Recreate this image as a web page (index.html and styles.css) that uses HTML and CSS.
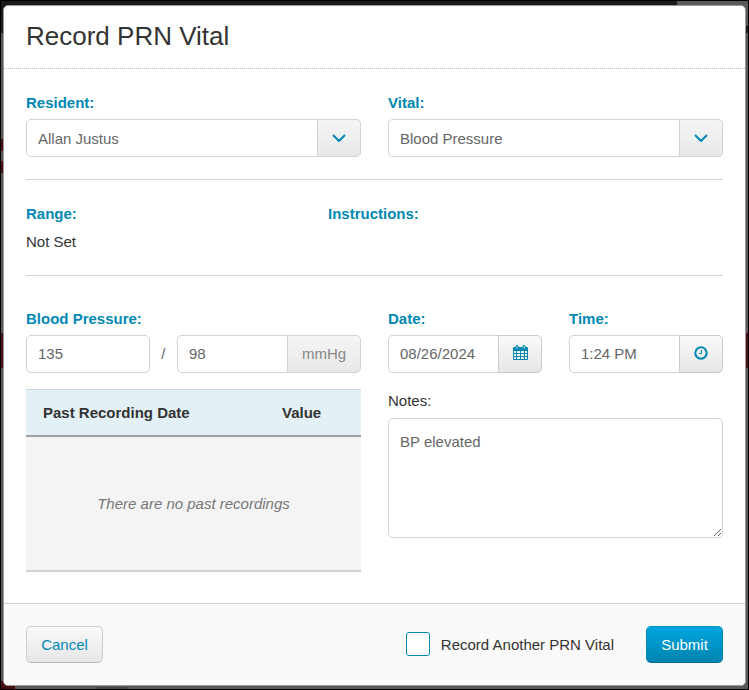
FILE: index.html
```html
<!DOCTYPE html>
<html lang="en">
<head>
<meta charset="utf-8">
<meta name="viewport" content="width=device-width, initial-scale=1">
<title>Record PRN Vital</title>
<link rel="stylesheet" href="styles.css">
</head>
<body>
<form class="modal">
  <header class="modal-header"><h1>Record PRN Vital</h1></header>
  <main class="modal-body">
    <div class="columns">
      <div class="field">
        <label for="resident">Resident:</label>
        <div class="select-box">
          <select id="resident"><option>Allan Justus</option></select>
          <span class="select-arrow"><svg width="14" height="8" viewBox="0 0 14 8" aria-hidden="true"><path d="M1 1l6 6 6-6" fill="none" stroke="currentColor" stroke-width="2"/></svg></span>
        </div>
      </div>
      <div class="field">
        <label for="vital">Vital:</label>
        <div class="select-box">
          <select id="vital"><option>Blood Pressure</option></select>
          <span class="select-arrow"><svg width="14" height="8" viewBox="0 0 14 8" aria-hidden="true"><path d="M1 1l6 6 6-6" fill="none" stroke="currentColor" stroke-width="2"/></svg></span>
        </div>
      </div>
    </div>

    <div class="info">
      <div>
        <h2>Range:</h2>
        <p>Not Set</p>
      </div>
      <div>
        <h2>Instructions:</h2>
      </div>
    </div>

    <div class="columns">
      <div>
        <div class="field">
          <label for="systolic">Blood Pressure:</label>
          <div class="pressure">
            <input id="systolic" class="text-input" type="text" value="135">
            <span class="slash">/</span>
            <div class="input-group">
              <input class="text-input" type="text" value="98" aria-labelledby="unit">
              <span class="addon" id="unit">mmHg</span>
            </div>
          </div>
        </div>
        <table class="history">
          <thead><tr><th class="date-col">Past Recording Date</th><th>Value</th></tr></thead>
          <tbody><tr><td colspan="2">There are no past recordings</td></tr></tbody>
        </table>
      </div>
      <div>
        <div class="columns">
          <div class="field">
            <label for="date">Date:</label>
            <div class="input-group">
              <input id="date" class="text-input" type="text" value="08/26/2024">
              <button class="icon-button" type="button" aria-labelledby="date">
                <svg width="15" height="15" viewBox="0 0 15 15" aria-hidden="true">
                  <rect y="2" width="15" height="13" rx="1" fill="currentColor"/>
                  <path d="M1 6h2v2H1zM4 6h3v2H4zM8 6h3v2H8zM12 6h2v2h-2zM1 9h2v2H1zM4 9h3v2H4zM8 9h3v2H8zM12 9h2v2h-2zM1 12h2v2H1zM4 12h3v2H4zM8 12h3v2H8zM12 12h2v2h-2z" fill="#f3f3f3"/>
                  <path d="M4 1.500v2M11 1.500v2" stroke="currentColor" stroke-width="3" stroke-linecap="round"/>
                  <path d="M4 1.500v2M11 1.500v2" stroke="#f3f3f3" stroke-width="1"/>
                </svg>
              </button>
            </div>
          </div>
          <div class="field">
            <label for="time">Time:</label>
            <div class="input-group">
              <input id="time" class="text-input" type="text" value="1:24 PM">
              <button class="icon-button" type="button" aria-labelledby="time">
                <svg width="14" height="14" viewBox="0 0 14 14" aria-hidden="true">
                  <circle cx="7" cy="7" r="5.700" fill="none" stroke="currentColor" stroke-width="2"/>
                  <path d="M7.500 4v3.500H5" fill="none" stroke="currentColor" stroke-width="1"/>
                </svg>
              </button>
            </div>
          </div>
        </div>
        <div class="field notes">
          <label for="notes">Notes:</label>
          <textarea id="notes">BP elevated</textarea>
        </div>
      </div>
    </div>
  </main>
  <footer class="modal-footer">
    <button class="button" type="button">Cancel</button>
    <label class="another"><input type="checkbox"> Record Another PRN Vital</label>
    <button class="button primary" type="submit">Submit</button>
  </footer>
</form>
</body>
</html>
```
FILE: styles.css
```css
* {
  box-sizing: border-box;
}

html {
  background: #000;
}

body {
  margin: 0;
  min-height: 100vh;
  display: flex;
  padding: 4px 2px 3px;
  border: 1px solid #000;
  background:
    linear-gradient(#5b5858, #5b5858) 100% 0 / 71px 25px no-repeat,
    linear-gradient(#1b1a1b, #1b1a1b) 0 0 / 100% 32px no-repeat,
    linear-gradient(#4d1011, #4d1011) 0 138px / 2px 12px no-repeat,
    linear-gradient(#4d1011, #4d1011) 0 160px / 2px 12px no-repeat,
    linear-gradient(#4d1011, #4d1011) 0 332px / 100% 35px no-repeat,
    linear-gradient(#461010, #461010) 0 100% / 14px 8px no-repeat,
    linear-gradient(#484646, #484646) 95px 100% / 32px 2px no-repeat,
    #5b5858;
  color: #333;
  font: 15px/20px "Liberation Sans", Arial, sans-serif;
}

h1,
h2,
p {
  margin: 0;
}

input,
select,
textarea,
button {
  margin: 0;
  font: inherit;
  color: #666;
}

.modal {
  flex: 1;
  display: flex;
  flex-direction: column;
  overflow: hidden;
  border: 1px solid #999;
  border-radius: 5px;
  background: #fff;
}

.modal-header {
  padding: 14px 22px 16px;
  border-bottom: 1px dotted #bbb;
}

h1 {
  font-size: 26px;
  font-weight: normal;
  line-height: 32px;
}

.modal-body {
  flex: 1;
  padding: 24px 22px 31px;
}

.columns {
  display: grid;
  grid-template-columns: 1fr 1fr;
  gap: 27px;
}

.field label,
h2 {
  display: block;
  color: #0088b3;
  font-size: 15px;
  font-weight: bold;
  line-height: 20px;
}

.field label {
  margin-bottom: 6px;
}

.select-box {
  position: relative;
}

select,
.text-input {
  width: 100%;
  min-width: 0;
  height: 38px;
  padding: 0 11px;
  border: 1px solid #d3d3d3;
  border-radius: 5px;
  background: #fff;
}

select {
  appearance: none;
  padding-top: 1px;
}

.text-input {
  padding-bottom: 2px;
}

.select-arrow,
.addon,
.icon-button {
  display: flex;
  align-items: center;
  justify-content: center;
  border: 1px solid #d3d3d3;
  border-radius: 0 5px 5px 0;
  background: linear-gradient(#f5f5f5, #e8e8e8);
  color: #0088b3;
}

.select-arrow {
  position: absolute;
  inset: 0 0 0 auto;
  width: 44px;
  pointer-events: none;
}

.info {
  display: grid;
  grid-template-columns: 302px 1fr;
  margin: 22px 0 33px;
  padding: 24px 0 23px;
  border: solid #d3d3d3;
  border-width: 1px 0;
}

.info p {
  margin-top: 8px;
}

.pressure {
  display: grid;
  grid-template-columns: 37% 27px 1fr;
  align-items: center;
}

.slash {
  text-align: center;
  color: #666;
}

.input-group {
  display: flex;
}

.input-group .text-input {
  flex: 1;
  border-right: 0;
  border-radius: 5px 0 0 5px;
}

.addon {
  width: 74px;
  color: #888;
}

.icon-button {
  width: 44px;
  padding: 0 0 3px;
  border-color: #ccc;
  background: linear-gradient(#fafafa, #e6e6e6);
}

.history {
  width: 100%;
  margin-top: 16px;
  border-collapse: separate;
  border-spacing: 0;
}

.history th {
  height: 48px;
  padding: 0 17px;
  border-top: 1px solid #d3d3d3;
  border-bottom: 2px solid #a0a0a0;
  background: #e3f0f5;
  text-align: left;
}

.date-col {
  width: 239px;
}

.history td {
  height: 135px;
  padding: 0;
  border-bottom: 2px solid #d3d3d3;
  background: #f4f4f4;
  color: #777;
  font-style: italic;
  text-align: center;
}

.notes {
  margin-top: 18px;
}

.notes label {
  margin-bottom: 7px;
  color: #333;
  font-weight: normal;
}

textarea {
  display: block;
  width: 100%;
  height: 120px;
  padding: 13px 11px;
  border: 1px solid #d3d3d3;
  border-radius: 5px;
  background: #fff;
}

.modal-footer {
  display: flex;
  align-items: center;
  padding: 22px;
  border-top: 1px solid #d3d3d3;
  background: #fafafa;
}

.button {
  min-width: 77px;
  height: 37px;
  padding: 0 13px;
  border: 1px solid #ccc;
  border-bottom-color: #b8b8b8;
  border-radius: 5px;
  background: linear-gradient(#fafafa, #e6e6e6);
  color: #0088b3;
}

.primary {
  border-color: #0099cc #0088b3 #006a8c;
  background: linear-gradient(#00a5e0, #0084b0);
  color: #fff;
}

.another {
  display: flex;
  align-items: center;
  gap: 11px;
  margin: 0 32px 0 auto;
}

.another input {
  appearance: none;
  width: 24px;
  height: 24px;
  margin-bottom: 2px;
  border: 1px solid #0088b3;
  border-radius: 3px;
  background: #fff;
}
```
